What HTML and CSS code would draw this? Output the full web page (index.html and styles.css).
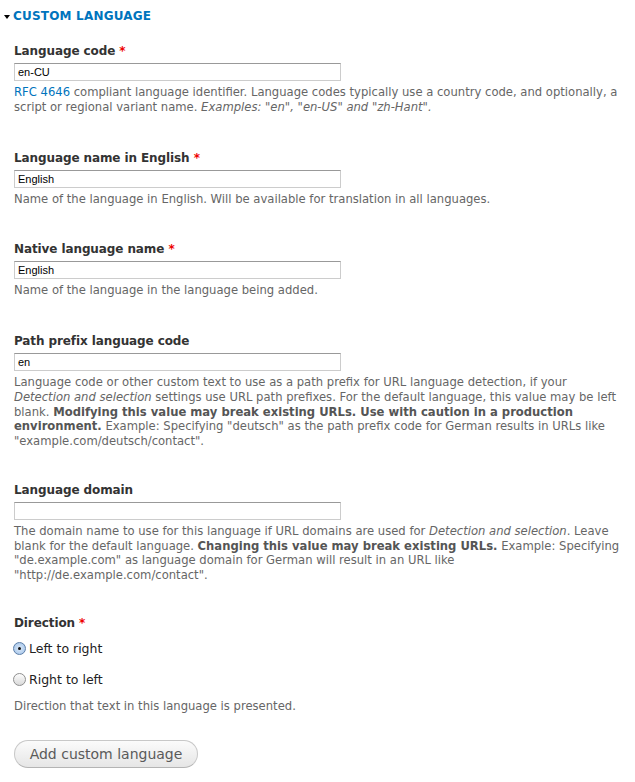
FILE: index.html
```html
<!DOCTYPE html>
<html>
<head>
<meta charset="utf-8">
<link rel="stylesheet" href="styles.css">
</head>
<body>
<fieldset class="fs">
  <div class="legend"><span class="tri"></span><span class="legend-text">Custom language</span></div>

  <div class="item first">
    <label class="lbl">Language code <span class="req">*</span></label>
    <div class="input">en-CU</div>
    <div class="desc"><a class="link">RFC 4646</a> compliant language identifier. Language codes typically use a country code, and optionally, a script or regional variant name. <em>Examples: "en", "en-US" and "zh-Hant".</em></div>
  </div>

  <div class="item">
    <label class="lbl">Language name in English <span class="req">*</span></label>
    <div class="input">English</div>
    <div class="desc">Name of the language in English. Will be available for translation in all languages.</div>
  </div>

  <div class="item">
    <label class="lbl">Native language name <span class="req">*</span></label>
    <div class="input">English</div>
    <div class="desc">Name of the language in the language being added.</div>
  </div>

  <div class="item">
    <label class="lbl">Path prefix language code</label>
    <div class="input">en</div>
    <div class="desc">Language code or other custom text to use as a path prefix for URL language detection, if your <em>Detection and selection</em> settings use URL path prefixes. For the default language, this value may be left blank. <strong>Modifying this value may break existing URLs. Use with caution in a production environment.</strong> Example: Specifying "deutsch" as the path prefix code for German results in URLs like "example.com/deutsch/contact".</div>
  </div>

  <div class="item tight">
    <label class="lbl">Language domain</label>
    <div class="input"></div>
    <div class="desc">The domain name to use for this language if URL domains are used for <em>Detection and selection</em>. Leave blank for the default language. <strong>Changing this value may break existing URLs.</strong> Example: Specifying "de.example.com" as language domain for German will result in an URL like "http://de.example.com/contact".</div>
  </div>

  <div class="item dir">
    <label class="lbl">Direction <span class="req">*</span></label>
    <div class="radios">
      <div class="radio"><span class="rb checked"></span><span class="rl">Left to right</span></div>
      <div class="radio"><span class="rb"></span><span class="rl">Right to left</span></div>
    </div>
    <div class="desc">Direction that text in this language is presented.</div>
  </div>

  <div class="actions">
    <button class="btn">Add custom language</button>
  </div>
</fieldset>
</body>
</html>
```

FILE: styles.css
```css
html, body {
  margin: 0;
  padding: 0;
  background: #fff;
}
body {
  font-family: "DejaVu Sans", sans-serif;
  color: #333;
}
.fs {
  border: 0;
  margin: 0;
  padding: 0;
}
.legend {
  display: flex;
  align-items: center;
  height: 16px;
  margin-top: 8px;
  padding-left: 4px;
}
.tri {
  width: 0;
  height: 0;
  border-left: 3.5px solid transparent;
  border-right: 3.5px solid transparent;
  border-top: 4px solid #000;
  margin-right: 3px;
  margin-top: 1px;
}
.legend-text {
  color: #0074bd;
  font-weight: bold;
  font-size: 12px;
  text-transform: uppercase;
  letter-spacing: 0.2px;
}
.item {
  padding-left: 14px;
  margin-top: 35px;
}
.item.first {
  margin-top: 19px;
}
.item.tight {
  margin-top: 33px;
}
.item.dir {
  margin-top: 32px;
}
.lbl {
  display: block;
  font-weight: bold;
  font-size: 12px;
  letter-spacing: -0.1px;
  line-height: 16px;
  color: #333;
}
.req {
  color: #e00;
}
.input {
  box-sizing: border-box;
  width: 327px;
  height: 18px;
  margin-top: 4px;
  border: 1px solid #ccc;
  border-top-color: #999;
  font-family: "Liberation Sans", Arial, sans-serif;
  font-size: 11px;
  line-height: 16px;
  padding: 0 3px;
  color: #000;
}
.desc {
  margin-top: 4px;
  font-size: 11.6px;
  line-height: 14.75px;
  color: #666;
  max-width: 606px;
}
.desc strong {
  color: #555;
}
.link {
  color: #0074bd;
}
.radios {
  margin-top: 10px;
}
.radio {
  display: flex;
  align-items: center;
  margin-left: -1px;
  height: 16px;
  margin-bottom: 15px;
}
.rb {
  box-sizing: border-box;
  width: 13px;
  height: 13px;
  border-radius: 50%;
  border: 1px solid #8e8e8e;
  background: linear-gradient(#fdfdfd, #d9d9d9);
  margin-right: 3px;
  display: flex;
  align-items: center;
  justify-content: center;
}
.rb.checked {
  border-color: #5c7ea8;
  background: radial-gradient(circle, #dce9f8 0%, #9dc0e8 100%);
}
.rb.checked::after {
  content: "";
  width: 3px;
  height: 3px;
  border-radius: 50%;
  background: #111;
}
.rl {
  font-size: 12.5px;
  color: #222;
}
.radio + .radio {
  margin-bottom: 0;
}
.radios + .desc {
  margin-top: 11px;
}
.actions {
  padding-left: 14px;
  margin-top: 26px;
}
.btn {
  box-sizing: border-box;
  width: 184px;
  height: 28px;
  border-radius: 14px;
  border: 1px solid #c8c8c8;
  border-bottom-color: #b4b4b4;
  background: linear-gradient(#fbfbfb, #e6e6e6);
  font-family: "DejaVu Sans", sans-serif;
  font-size: 14px;
  color: #5a5a5a;
  padding: 0;
}
```
